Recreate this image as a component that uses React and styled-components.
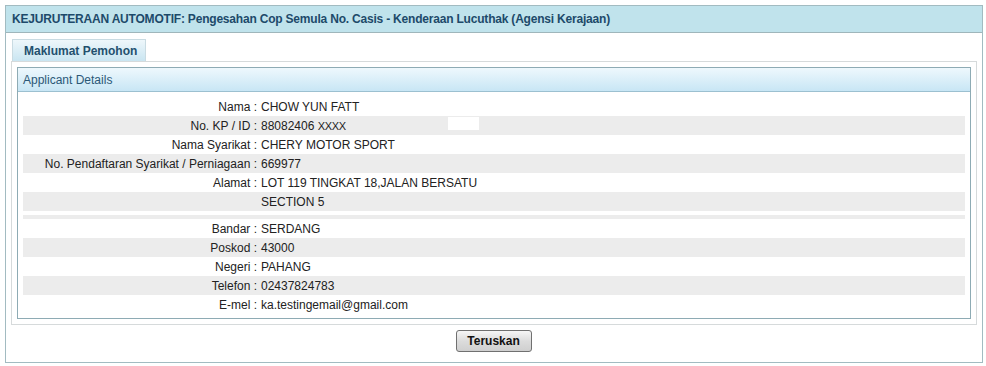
import styled, { createGlobalStyle } from 'styled-components'

const GlobalStyle = createGlobalStyle`
  body {
    margin: 0;
    background: #fff;
    font-family: 'Liberation Sans', Arial, sans-serif;
    font-size: 12px;
    color: #222;
  }
`

const Page = styled.div`
  padding: 5px 3px 0 5px;
`

const OuterPanel = styled.div`
  width: 976px;
  height: 356px;
  border: 1px solid #a2bbc1;
  display: flex;
  flex-direction: column;
`

const TitleBar = styled.div`
  height: 26px;
  line-height: 27px;
  padding-left: 6px;
  background: #c0e3ec;
  border-bottom: 1px solid #9fb6bb;
  color: #1d4a6a;
  font-weight: bold;
  font-size: 12px;
  letter-spacing: -0.2px;
`

const Body = styled.div`
  padding: 6px 5px 0 5px;
  display: flex;
  flex-direction: column;
`

const TabStrip = styled.div`
  display: flex;
  padding-left: 1px;
`

const Tab = styled.div`
  box-sizing: border-box;
  width: 134px;
  height: 22px;
  line-height: 22px;
  padding: 0 0 0 11px;
  white-space: nowrap;
  border: 1px solid #c9dbe2;
  border-bottom: none;
  background: linear-gradient(#eef7fb, #c9e5f1);
  color: #23506e;
  font-weight: bold;
`

const TabPanel = styled.div`
  border: 1px solid #d6dadb;
  padding: 5px;
`

const DetailsPanel = styled.div`
  border: 1px solid #8eabb4;
`

const DetailsHeader = styled.div`
  height: 23px;
  line-height: 24px;
  padding-left: 5px;
  background: linear-gradient(#eef8fd, #c8e6f5);
  border-bottom: 1px solid #9cc0d0;
  color: #2b5877;
`

const DetailsBody = styled.div`
  padding: 5px 5px 4px 5px;
`

const Row = styled.div`
  display: flex;
  height: 19px;
  line-height: 20px;
  background: ${(p) => (p.$shade ? '#ececec' : '#fff')};
  position: relative;
`

const Label = styled.div`
  width: 234px;
  text-align: right;
  white-space: nowrap;
`

const Value = styled.div`
  padding-left: 4px;
  white-space: nowrap;
`

const Masked = styled.span`
  font-size: 11px;
  letter-spacing: -0.3px;
`

const Blank = styled.div`
  position: absolute;
  left: 425px;
  top: 1px;
  width: 31px;
  height: 13px;
  background: #fff;
`

const Spacer = styled.div`
  height: 4px;
  margin-top: 4px;
  background: #ececec;
`

const Actions = styled.div`
  display: flex;
  justify-content: center;
  padding-top: 5px;
  padding-right: 1px;
`

const Button = styled.button`
  width: 76px;
  height: 22px;
  border: 1px solid #707070;
  border-radius: 3px;
  background: linear-gradient(#f6f6f6, #dcdcdc 50%, #cfcfcf);
  font-family: 'Liberation Sans', Arial, sans-serif;
  font-size: 12px;
  font-weight: bold;
  color: #111;
  padding: 0;
`

const rows = [
  ['Nama :', 'CHOW YUN FATT'],
  ['No. KP / ID :', 'kp'],
  ['Nama Syarikat :', 'CHERY MOTOR SPORT'],
  ['No. Pendaftaran Syarikat / Perniagaan :', '669977'],
  ['Alamat :', 'LOT 119 TINGKAT 18,JALAN BERSATU'],
  ['', 'SECTION 5'],
]

const rows2 = [
  ['Bandar :', 'SERDANG'],
  ['Poskod :', '43000'],
  ['Negeri :', 'PAHANG'],
  ['Telefon :', '02437824783'],
  ['E-mel :', 'ka.testingemail@gmail.com'],
]

const renderValue = (v) =>
  v === 'kp' ? (
    <>
      88082406 <Masked>XXXX</Masked>
    </>
  ) : (
    v
  )

const App = () => {
  return (
    <>
      <GlobalStyle />
      <Page>
        <OuterPanel>
          <TitleBar>
            KEJURUTERAAN AUTOMOTIF: Pengesahan Cop Semula No. Casis - Kenderaan Lucuthak (Agensi Kerajaan)
          </TitleBar>
          <Body>
            <TabStrip>
              <Tab>Maklumat Pemohon</Tab>
            </TabStrip>
            <TabPanel>
              <DetailsPanel>
                <DetailsHeader>Applicant Details</DetailsHeader>
                <DetailsBody>
                  {rows.map(([label, value], i) => (
                    <Row key={i} $shade={i % 2 === 1}>
                      <Label>{label}</Label>
                      <Value>{renderValue(value)}</Value>
                      {value === 'kp' && <Blank />}
                    </Row>
                  ))}
                  <Spacer />
                  {rows2.map(([label, value], i) => (
                    <Row key={i} $shade={i % 2 === 1}>
                      <Label>{label}</Label>
                      <Value>{value}</Value>
                    </Row>
                  ))}
                </DetailsBody>
              </DetailsPanel>
            </TabPanel>
            <Actions>
              <Button>Teruskan</Button>
            </Actions>
          </Body>
        </OuterPanel>
      </Page>
    </>
  )
}

export default App
